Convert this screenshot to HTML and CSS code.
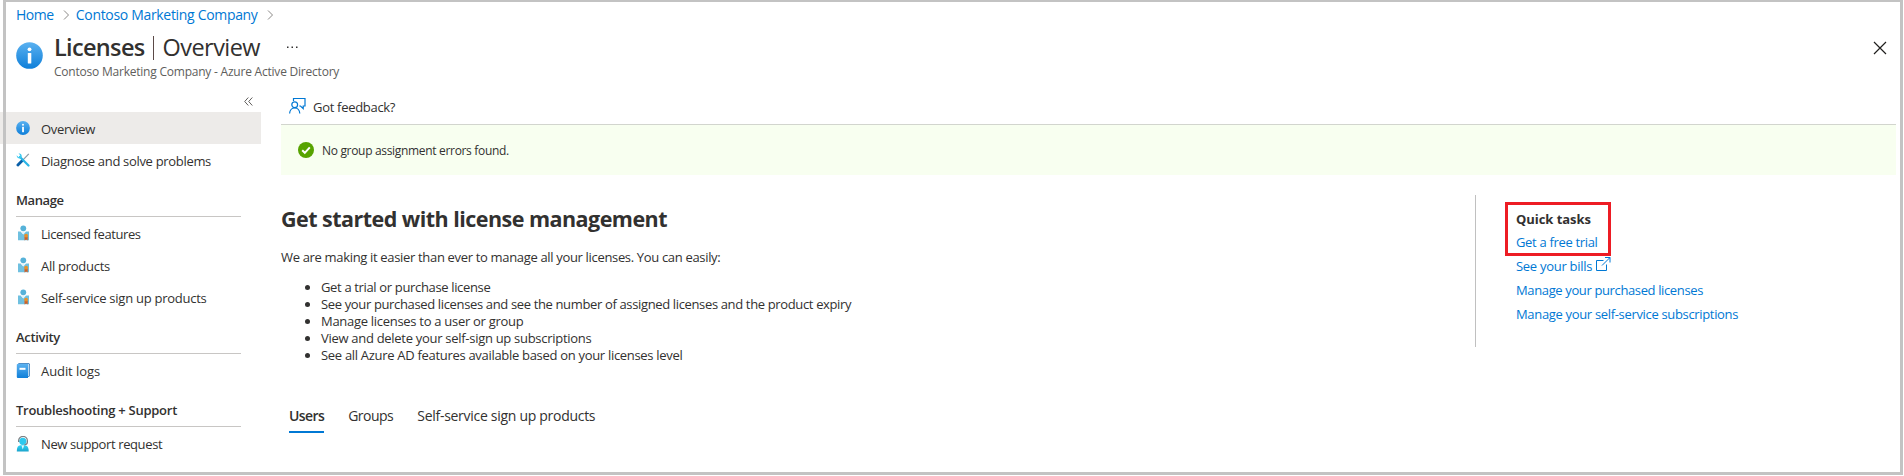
FILE: index.html
```
<!DOCTYPE html>
<html lang="en">
<head>
<meta charset="utf-8">
<title>Licenses | Overview</title>
<link rel="stylesheet" href="styles.css">
</head>
<body>
<svg width="0" height="0" class="defs" aria-hidden="true">
  <defs>
    <linearGradient id="blue" x1="0" y1="0" x2="0" y2="1"><stop offset="0" stop-color="#5ab1f0"/><stop offset="1" stop-color="#0f7fd9"/></linearGradient>
    <linearGradient id="cyan" x1="0" y1="0" x2="0" y2="1"><stop offset="0" stop-color="#32d4f5"/><stop offset="1" stop-color="#1ba4cc"/></linearGradient>
    <symbol id="info" viewBox="0 0 27 27"><circle cx="13.5" cy="13.5" r="13.3" fill="url(#blue)"/><circle cx="13.5" cy="7.3" r="1.9" fill="#fff"/><rect x="11.8" y="11" width="3.5" height="10.5" rx=".6" fill="#fff"/></symbol>
    <symbol id="license" viewBox="0 0 14 16"><path d="M1 6.400h2.600L6.300 9.400 9 6.400h3v8.800H1z" fill="#6fc0e0"/><path d="M3.900 6.400 6.300 9.200 8.700 6.400z" fill="#e4f4fa"/><circle cx="6.300" cy="3.300" r="2.900" fill="#56b2d9"/><path d="M7.500 11.500h3.200v3.900l-1.600-.9-1.600.9z" fill="#cf6027"/><circle cx="9.100" cy="10.600" r="1.900" fill="#e8902a"/></symbol>
  </defs>
</svg>
<div class="page">
  <header class="header">
    <nav class="crumbs">
      <a class="t-home">Home</a>
      <svg class="chev" width="7" height="10" viewBox="0 0 7 10"><path d="M1 .5 5.500 5 1 9.500"/></svg>
      <a class="t-org">Contoso Marketing Company</a>
      <svg class="chev" width="7" height="10" viewBox="0 0 7 10"><path d="M1 .5 5.500 5 1 9.500"/></svg>
    </nav>
    <div class="title-row">
      <svg class="title-icon" width="27" height="27"><use href="#info"/></svg>
      <div class="titles">
        <h1 class="title"><b class="t-lic">Licenses</b><i class="bar"></i><span class="t-over">Overview</span>
          <svg class="dots" width="13" height="3" viewBox="0 0 13 3"><path d="M1 .6h1.500v1.500H1zM5.500.6H7v1.500H5.500zM10 .6h1.500v1.500H10z"/></svg></h1>
        <div class="subtitle"><span class="t-sub">Contoso Marketing Company - Azure Active Directory</span></div>
      </div>
      <svg class="close" width="14" height="14" viewBox="0 0 14 14"><path d="M1 1l12 12M13 1 1 13"/></svg>
    </div>
  </header>
  <div class="body">
    <aside class="menu">
      <div class="collapse"><svg width="9" height="9" viewBox="0 0 9 9"><path d="M4.300.5.700 4.500l3.600 4M8.300.5 4.700 4.500l3.600 4"/></svg></div>
      <a class="item active"><svg class="icon" width="14" height="14"><use href="#info"/></svg><span class="t-m1">Overview</span></a>
      <a class="item"><svg class="icon" width="14" height="14" viewBox="0 0 14 14"><path d="M12.800.8 7.500 6.300" stroke="#8a9aa3" stroke-width="1.200"/><path d="M6.600 7.200 1.900 12" stroke="#0a5fa8" stroke-width="2.800" stroke-linecap="round"/><path d="M4 4l8.500 8.500" stroke="#2cb5e6" stroke-width="2.200" stroke-linecap="round"/><path d="M.6 2.300 2.600 4.200 4.300 2.300 2.500.5C4.800-.1 6.300 2 5.600 4.200 4.500 6.500 1 6.100.6 2.300z" fill="#37c8ef"/></svg><span class="t-m2">Diagnose and solve problems</span></a>
      <h2 class="group"><span class="t-g1">Manage</span></h2>
      <a class="item"><svg class="icon lic" width="14" height="16"><use href="#license"/></svg><span class="t-m3">Licensed features</span></a>
      <a class="item"><svg class="icon lic" width="14" height="16"><use href="#license"/></svg><span class="t-m4">All products</span></a>
      <a class="item"><svg class="icon lic" width="14" height="16"><use href="#license"/></svg><span class="t-m5">Self-service sign up products</span></a>
      <h2 class="group"><span class="t-g2">Activity</span></h2>
      <a class="item"><svg class="icon low" width="14" height="16" viewBox="0 0 14 16"><rect x="2" y=".3" width="11.700" height="13.500" rx="1" fill="#1769b5"/><rect x="2.500" y="1" width="10.400" height="12" fill="#c8e4f8"/><path d="M1.500 1H12v14H1.800Q.8 15 .8 14V1.800Q.8 1 1.500 1z" fill="url(#blue)"/><rect x="3.500" y="4.800" width="6" height="2" fill="#fff"/></svg><span class="t-m6">Audit logs</span></a>
      <h2 class="group"><span class="t-g3">Troubleshooting + Support</span></h2>
      <a class="item"><svg class="icon low" width="14" height="16" viewBox="0 0 14 16"><path d="M.8 15.500C.8 11 2 9.500 4.500 9.200h4.300c2.500.3 3.900 1.800 3.900 6.300z" fill="url(#cyan)"/><path d="M5.500 9.500h2.600l-1.300 4z" fill="#e6f9fd"/><circle cx="6.800" cy="5.300" r="3.600" fill="#2fc9ee"/><path d="M2.600 6V4.800a4.400 4.400 0 0 1 8.800 0V6c0 1.800-1 2.700-3 2.800" fill="none" stroke="#7b7f83" stroke-width="1.200"/></svg><span class="t-m7">New support request</span></a>
    </aside>
    <main class="content">
      <div class="commands">
        <svg class="fb" width="17" height="17" viewBox="0 0 17 17"><path d="M4.500 4V1.500h11.500v7.500h-1.800v2.600L11.500 9H10.300" /><circle cx="5.700" cy="7.800" r="2.900"/><path d="M.6 16.500c.2-3.300 2.400-5.600 5.100-5.600s4.900 2.300 5.100 5.600"/></svg>
        <span class="t-fb">Got feedback?</span>
      </div>
      <div class="banner">
        <svg width="16" height="16" viewBox="0 0 16 16"><circle cx="8" cy="8" r="8" fill="#57a300"/><path d="M4.200 8.200 6.800 10.800 11.800 5.300" fill="none" stroke="#fff" stroke-width="2"/></svg>
        <span class="t-ban">No group assignment errors found.</span>
      </div>
      <div class="columns">
        <section class="intro">
          <h2 class="heading"><span class="t-head">Get started with license management</span></h2>
          <p class="lead"><span class="t-lead">We are making it easier than ever to manage all your licenses. You can easily:</span></p>
          <ul class="list">
            <li><span class="t-l1">Get a trial or purchase license</span></li>
            <li><span class="t-l2">See your purchased licenses and see the number of assigned licenses and the product expiry</span></li>
            <li><span class="t-l3">Manage licenses to a user or group</span></li>
            <li><span class="t-l4">View and delete your self-sign up subscriptions</span></li>
            <li><span class="t-l5">See all Azure AD features available based on your licenses level</span></li>
          </ul>
          <div class="tabs"><a class="tab current"><span class="t-t1">Users</span></a><a class="tab"><span class="t-t2">Groups</span></a><a class="tab"><span class="t-t3">Self-service sign up products</span></a></div>
        </section>
        <section class="quick">
          <h3><span class="t-q0">Quick tasks</span></h3>
          <a><span class="t-q1">Get a free trial</span></a>
          <a><span class="t-q2">See your bills</span><svg class="ext" width="15" height="15" viewBox="0 0 15 15"><path d="M7.500 3.500H.5v10h10V7.500M9 .5h5v5M14 .5 6 8.500"/></svg></a>
          <a><span class="t-q3">Manage your purchased licenses</span></a>
          <a><span class="t-q4">Manage your self-service subscriptions</span></a>
          <div class="highlight"></div>
        </section>
      </div>
    </main>
  </div>
  <div class="frame"></div>
</div>
</body>
</html>
```
FILE: styles.css
```
* { box-sizing: border-box; }
body { margin: 0; background: #fff; color: #323130; font: 13px/20px "Open Sans", "Noto Sans", sans-serif; }
h1, h2, h3, p, ul { margin: 0; padding: 0; font-weight: 400; }
a { color: inherit; text-decoration: none; white-space: nowrap; }
svg { display: block; flex: none; }
span { white-space: nowrap; }
.defs { position: absolute; }
.page { position: relative; width: 1904px; height: 476px; overflow: hidden; }
.frame { position: absolute; left: 3px; top: 0; width: 1900px; height: 475px; border: 3px solid #c3c3c3; border-top-width: 2px; }

.header { height: 79px; }
.crumbs { display: flex; align-items: center; height: 25px; padding: 5px 0 0 16px; font-size: 14px; color: #0078d4; }
.chev { margin: 0 6px 0 9px; fill: none; stroke: #8a8886; }
.title-row { display: flex; padding: 6px 17px 0 16px; }
.title-icon { margin: 11px 11px 0 0; }
.titles { flex: 1; }
.title { display: flex; align-items: center; height: 33px; font-size: 23.5px; line-height: 33px; }
.title b { font-weight: 600; }
.bar { width: 1px; height: 24px; margin: 0 9px 0 8px; background: #5b4a48; }
.dots { margin: 0 0 0 26px; fill: #323130; }
.subtitle { height: 16px; font-size: 12px; line-height: 16px; color: #605e5c; }
.close { margin-top: 10px; stroke: #201f1e; stroke-width: 1.2; }

.body { display: grid; grid-template-columns: 261px 1fr; column-gap: 20px; }
.collapse { display: flex; justify-content: flex-end; height: 33px; padding: 18px 8px 0 0; }
.collapse svg { fill: none; stroke: #605e5c; }
.item { display: flex; align-items: center; height: 32px; padding-left: 16px; }
.item span { padding-top: 2px; }
.active { background: #edebe9; }
.icon { margin-right: 11px; }
.low { margin-top: 1px; }
.lic { margin-left: 1px; margin-right: 10px; }
.group { height: 41px; margin: 0 20px 0 16px; padding-top: 14px; border-bottom: 1px solid #c8c6c4; font-size: 13px; font-weight: 600; }

.content { margin-right: 8px; }
.commands { display: flex; height: 46px; padding: 18px 0 0 8px; border-bottom: 1px solid #d2d5ce; }
.fb { margin-right: 7px; fill: none; stroke: #0078d4; stroke-width: 1.2; }
.banner { display: flex; align-items: center; gap: 8px; height: 50px; padding-left: 17px; background: #f8fff0; font-size: 12px; }
.banner span { padding-top: 2px; }
.columns { display: flex; justify-content: space-between; padding-top: 20px; }
.intro { padding-top: 9px; }
.heading { font-size: 21.5px; line-height: 30px; font-weight: 700; }
.lead { margin-top: 13px; }
.list { margin-top: 12px; padding-left: 40px; line-height: 17px; }
.tabs { display: flex; gap: 24px; margin-top: 42px; padding-left: 8px; font-size: 14px; }
.tab { height: 27px; }
.current { border-bottom: 2px solid #0078d4; font-weight: 600; }
.quick { position: relative; width: 421px; height: 152px; padding: 12px 0 0 40px; border-left: 1px solid #c0c0c0; color: #0078d4; line-height: 24px; }
.quick h3 { height: 23px; font-size: 13px; font-weight: 700; color: #323130; }
.quick a { display: flex; height: 24px; }
.ext { margin: 3px 0 0 4px; fill: none; stroke: #0078d4; }
.highlight { position: absolute; left: 29px; top: 7px; width: 106px; height: 54px; border: 3px solid #ed1c24; }

/* Tracking per label */
.t-home { letter-spacing: -.45px; }
.t-org { letter-spacing: -.32px; }
.t-lic { letter-spacing: -.67px; }
.t-over { letter-spacing: -.55px; }
.t-sub { letter-spacing: -.22px; }
.t-m1 { letter-spacing: -.3px; }
.t-m2 { letter-spacing: -.315px; }
.t-m3 { letter-spacing: -.42px; }
.t-m4 { letter-spacing: -.27px; }
.t-m5 { letter-spacing: -.26px; }
.t-m6 { letter-spacing: -.08px; }
.t-m7 { letter-spacing: -.38px; }
.t-g1 { letter-spacing: -.42px; }
.t-g2 { letter-spacing: -.31px; }
.t-g3 { letter-spacing: -.26px; }
.t-fb { letter-spacing: -.3px; }
.t-ban { letter-spacing: -.32px; }
.t-head { letter-spacing: -.53px; }
.t-lead { letter-spacing: -.33px; }
.t-l1 { letter-spacing: -.345px; }
.t-l2 { letter-spacing: -.355px; }
.t-l3 { letter-spacing: -.29px; }
.t-l4 { letter-spacing: -.29px; }
.t-l5 { letter-spacing: -.303px; }
.t-t1 { letter-spacing: -.6px; }
.t-t2 { letter-spacing: -.5px; }
.t-t3 { letter-spacing: -.29px; }
.t-q0 { letter-spacing: -.05px; }
.t-q1 { letter-spacing: -.33px; }
.t-q2 { letter-spacing: -.28px; }
.t-q3 { letter-spacing: -.37px; }
.t-q4 { letter-spacing: -.33px; }
```
